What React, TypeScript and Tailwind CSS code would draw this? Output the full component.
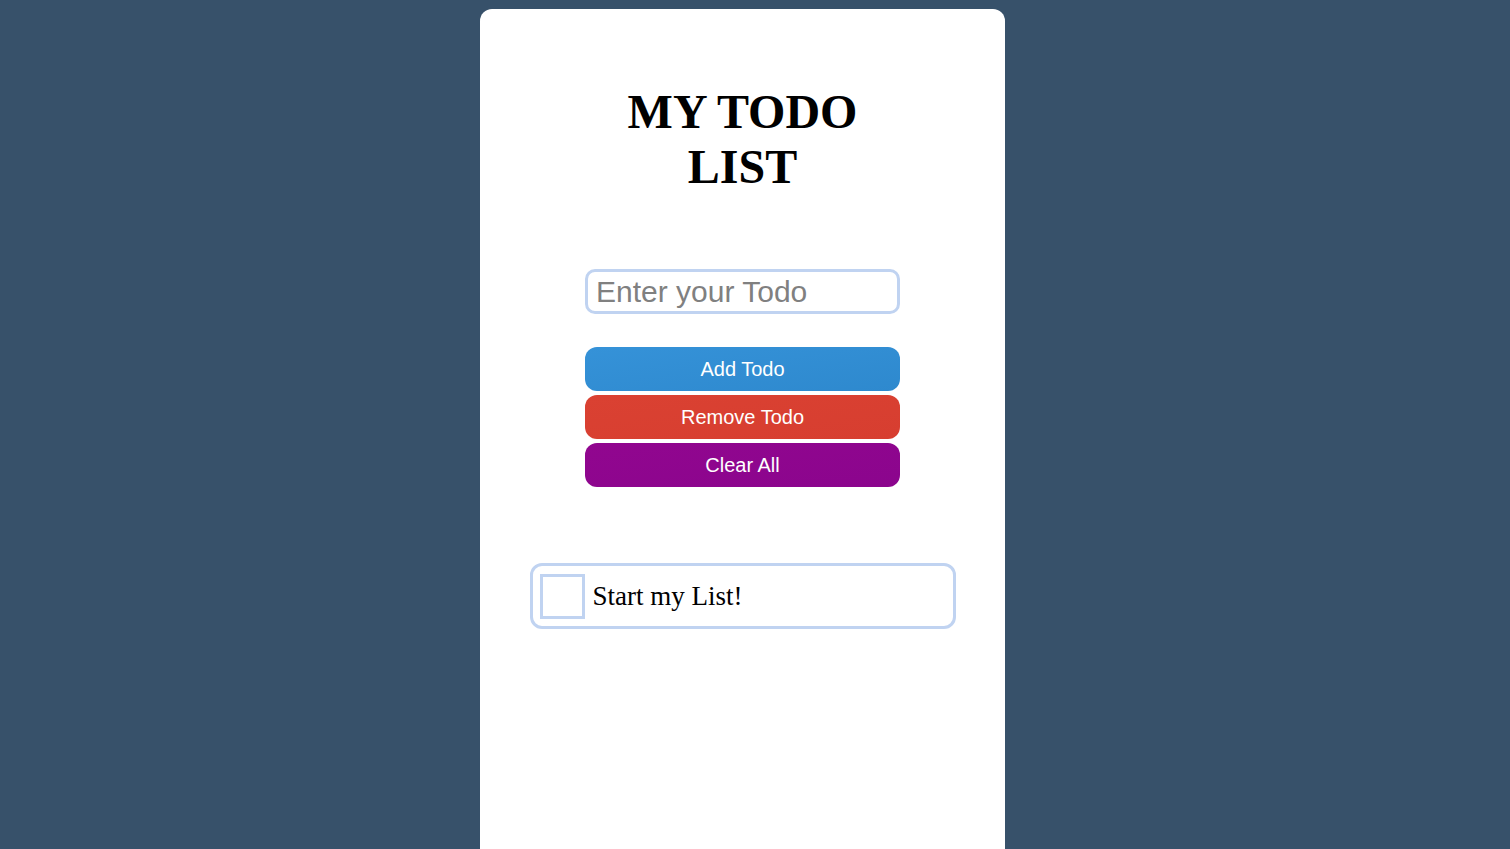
export default function App() {
  return (
    <div className="min-h-screen bg-[#37516a] pt-[9px]">
      <div className="ml-[480px] w-[525px] min-h-[840px] rounded-t-[12px] bg-white flex flex-col items-center pt-[75px]">
        <h1 className="w-[260px] text-center text-[48px] leading-[55px] font-bold text-black font-['Liberation_Serif',serif]">
          MY TODO LIST
        </h1>

        <input
          type="text"
          placeholder="Enter your Todo"
          className="mt-[75px] w-[315px] h-[45px] rounded-[10px] border-[3px] border-[#c0d3f1] px-[8px] text-[30px] font-['Liberation_Sans',sans-serif] placeholder:text-[#808080] outline-none"
        />

        <div className="mt-[33px] w-[315px] flex flex-col gap-[4px] font-['Liberation_Sans',sans-serif] text-[20px] text-white">
          <button className="h-[44px] rounded-[12px] bg-linear-to-br from-[#3592d8] to-[#2e89ce]">Add Todo</button>
          <button className="h-[44px] rounded-[12px] bg-linear-to-br from-[#da4132] to-[#d73e30]">Remove Todo</button>
          <button className="h-[44px] rounded-[12px] bg-linear-to-br from-[#91068f] to-[#8b058d]">Clear All</button>
        </div>

        <ul className="mt-[76px] w-[426px]">
          <li className="h-[66px] rounded-[12px] border-[3px] border-[#c0d3f1] flex items-center pl-[7px] gap-[8px]">
            <span className="w-[45px] h-[45px] border-[3px] border-[#c0d3f1]" />
            <span className="text-[27px] font-['Liberation_Serif',serif] text-black">Start my List!</span>
          </li>
        </ul>
      </div>
    </div>
  );
}
